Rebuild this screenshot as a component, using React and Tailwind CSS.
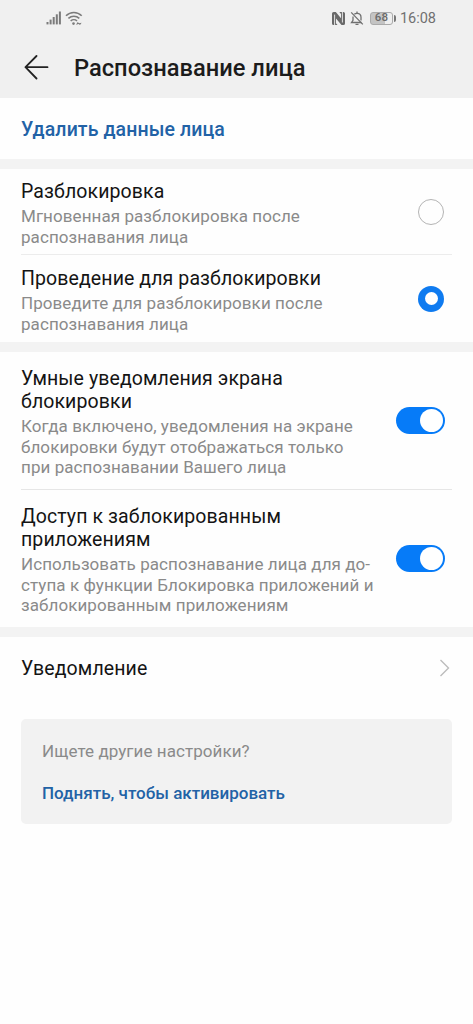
import React, { useState } from 'react';

function SignalIcon() {
    return (
        <svg width="16" height="14" viewBox="0 0 16 14" fill="#7b7b7b">
            <rect x="0.5" y="11" width="2" height="2.4" />
            <rect x="3.6" y="8.6" width="2" height="4.8" />
            <rect x="6.7" y="6" width="2" height="7.4" />
            <rect x="9.8" y="3.3" width="2" height="10.1" />
            <rect x="12.9" y="0.5" width="2" height="12.9" />
        </svg>
    );
}

function WifiIcon() {
    return (
        <svg width="18" height="15" viewBox="0 0 18 15" fill="none" stroke="#7b7b7b" strokeWidth="1.6">
            <path d="M1 4.800C5.500 0.300 12.200 0.300 16.700 4.800" />
            <path d="M3.400 7.400C6.500 4.500 11.200 4.500 14.300 7.400" />
            <path d="M5.700 10C7.500 8.300 10.200 8.300 12 10" />
            <circle cx="8.5" cy="12.6" r="1.3" fill="#7b7b7b" stroke="none" />
            <path d="M11 13.700l1.700-2.800 1.300 1.400 2.600-0.600-1.600 2.400-1.300-1.200z" fill="#7b7b7b" stroke="none" />
        </svg>
    );
}

function NfcIcon() {
    return (
        <svg width="15" height="15" viewBox="0 0 15 15" fill="#696969">
            <path d="M2.600 1H4.800L10 7.200V3L8.300 1h4.100A1.600 1.600 0 0 1 14 2.600v9.800a1.600 1.600 0 0 1-1.600 1.600h-1.900L5 7.600v4.600L6.500 14H2.600A1.600 1.600 0 0 1 1 12.400V2.600A1.600 1.600 0 0 1 2.600 1z" />
            <path d="M3.600 3.600V14M11.400 1v10.500" stroke="#f0f0f0" strokeWidth="0.9" />
        </svg>
    );
}

function BellOffIcon() {
    return (
        <svg width="14" height="15" viewBox="0 0 14 15" fill="none" stroke="#707070" strokeWidth="1.3">
            <path d="M4.300 3.200C5 2.600 5.900 2.300 7 2.300c2.400 0 4 1.700 4 4v3.200M3 5.500v3.800L1.500 11.500h10" />
            <path d="M7 0.600v1.700M5.500 13.400h3M1.200 1.400l11.600 12" />
        </svg>
    );
}

function Battery({ level }) {
    return (
        <div className="flex items-center">
            <div className="flex h-[13px] w-[23px] items-center justify-center rounded-[3px] border border-[#aaaaaa] bg-linear-to-r from-[#c4c4c4] from-68% to-[#efefef] to-68% text-[11.5px] leading-none font-medium text-[#6a6a6a]">
                {level}
            </div>
            <div className="ml-px h-[7px] w-[2px] rounded-r-sm bg-[#777777]" />
        </div>
    );
}

function StatusBar() {
    return (
        <div className="flex h-[36px] items-center justify-between pr-[37px] pl-[46px]">
            <div className="flex items-center gap-[3px]">
                <SignalIcon />
                <WifiIcon />
            </div>
            <div className="flex items-center">
                <NfcIcon />
                <div className="ml-[4px]"><BellOffIcon /></div>
                <div className="ml-[6px]"><Battery level={68} /></div>
                <span className="mt-[2px] ml-[4px] text-[14.5px] leading-[16px] text-[#707070]">16:08</span>
            </div>
        </div>
    );
}

function Radio({ checked, onClick }) {
    return (
        <button
            onClick={onClick}
            className={`mr-[1px] flex h-[26px] w-[26px] shrink-0 items-center justify-center rounded-full ${checked ? 'bg-[#0f7bf0]' : 'border border-[#b4b4b4]'}`}
        >
            {checked && <span className="h-[13px] w-[13px] rounded-full bg-white" />}
        </button>
    );
}

function Toggle({ checked, onClick }) {
    return (
        <button
            onClick={onClick}
            className={`flex h-[27px] w-[49px] shrink-0 items-center rounded-full px-[2px] ${checked ? 'justify-end bg-[#067bf8]' : 'justify-start bg-[#c8c8c8]'}`}
        >
            <span className="h-[23px] w-[23px] rounded-full bg-white" />
        </button>
    );
}

function Setting({ title, lines, className, children }) {
    return (
        <div className={`flex items-center justify-between pr-[7px] ${className}`}>
            <div className="pt-[4px] whitespace-nowrap">
                <h2 className="text-[19.5px] leading-[23px] tracking-[0.1px] text-[#141414]">
                    {title.map((line) => <span key={line} className="block">{line}</span>)}
                </h2>
                <p className="mt-[3px] text-[17px] leading-[20.4px] tracking-[0.07px] text-[#8a8a8a]">
                    {lines.map((line) => <span key={line} className="block">{line}</span>)}
                </p>
            </div>
            {children}
        </div>
    );
}

export default function App() {
    const [mode, setMode] = useState('swipe'); // 'instant' or 'swipe'
    const [smart, setSmart] = useState(true);
    const [appLock, setAppLock] = useState(true);

    return (
        <div className="h-[1024px] w-[473px] overflow-hidden bg-[#fefefe] font-['Roboto','Noto_Sans',sans-serif]">
            <header className="h-[98px] bg-[#f0f0f0]">
                <StatusBar />
                <div className="flex h-[62px] items-center pl-[24px]">
                    <svg width="25" height="25" viewBox="0 0 25 25" fill="none" stroke="#222222" strokeWidth="1.8" strokeLinecap="round" strokeLinejoin="round">
                        <path d="M12.500 1L1.500 12.200l11 11.300M1.500 12.200h22" />
                    </svg>
                    <h1 className="mt-[2px] ml-[25px] text-[23.7px] leading-[28px] font-medium whitespace-nowrap text-[#1c1c1c]">Распознавание лица</h1>
                </div>
            </header>

            <div className="flex h-[61px] items-center pt-[2px] pl-[21px] text-[19.5px] font-medium tracking-[0.1px] text-[#2262a6]">
                Удалить данные лица
            </div>

            <div className="h-[10px] bg-[#f3f3f3]" />

            <section className="h-[173px] px-[21px]">
                <Setting
                    className="h-[86px] border-b border-[#ececec]"
                    title={['Разблокировка']}
                    lines={['Мгновенная разблокировка после', 'распознавания лица']}
                >
                    <Radio checked={mode === 'instant'} onClick={() => setMode('instant')} />
                </Setting>
                <Setting
                    className="h-[87px]"
                    title={['Проведение для разблокировки']}
                    lines={['Проведите для разблокировки после', 'распознавания лица']}
                >
                    <Radio checked={mode === 'swipe'} onClick={() => setMode('swipe')} />
                </Setting>
            </section>

            <div className="h-[10px] bg-[#f3f3f3]" />

            <section className="h-[275px] px-[21px]">
                <Setting
                    className="h-[138px] border-b border-[#e6e6e6]"
                    title={['Умные уведомления экрана', 'блокировки']}
                    lines={['Когда включено, уведомления на экране', 'блокировки будут отображаться только', 'при распознавании Вашего лица']}
                >
                    <Toggle checked={smart} onClick={() => setSmart(!smart)} />
                </Setting>
                <Setting
                    className="h-[137px]"
                    title={['Доступ к заблокированным', 'приложениям']}
                    lines={['Использовать распознавание лица для до-', 'ступа к функции Блокировка приложений и', 'заблокированным приложениям']}
                >
                    <Toggle checked={appLock} onClick={() => setAppLock(!appLock)} />
                </Setting>
            </section>

            <div className="h-[10px] bg-[#f3f3f3]" />

            <div className="flex h-[62px] items-center justify-between pr-[23px] pl-[21px]">
                <span className="pt-[2px] text-[19.5px] tracking-[0.1px] text-[#141414]">Уведомление</span>
                <svg width="11" height="18" viewBox="0 0 11 18" fill="none" stroke="#bcbcbc" strokeWidth="1.4">
                    <path d="M1.500 1l8 8-8 8" />
                </svg>
            </div>

            <div className="mx-[21px] mt-[20px] flex h-[105px] flex-col rounded-[5px] bg-[#f2f2f2] pt-[22px] pl-[21px]">
                <p className="text-[17px] leading-[21px] tracking-[0.07px] text-[#8a8a8a]">Ищете другие настройки?</p>
                <a className="mt-[21px] text-[17px] leading-[20px] font-medium text-[#2262a6]">Поднять, чтобы активировать</a>
            </div>
        </div>
    );
}
